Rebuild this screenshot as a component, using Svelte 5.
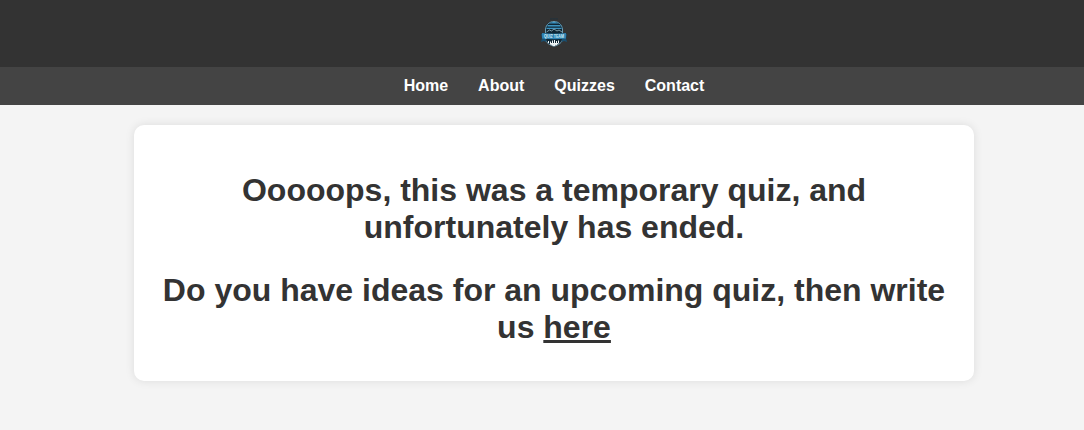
<script>
  const links = ['Home', 'About', 'Quizzes', 'Contact'];
</script>

<div class="page">
  <header>
    <svg class="logo" width="32" height="31" viewBox="0 0 32 31" aria-hidden="true">
      <path d="M12 .8h8M13 0v1.500m3-1.500v1.500m3-1.500v1.500" stroke="#26333b" stroke-width="1" />
      <path d="M7 22V12c0-5.500 3.700-9 9-9s9 3.500 9 9v10z" fill="#102735" />
      <path d="M7.500 15v-4c.6-4.400 4-7.500 8.500-7.500s7.900 3.100 8.500 7.500v4" fill="none" stroke="#74a8bf" stroke-width=".9" />
      <path d="M11 5.500c3-2 7-2 10 0zM9.500 7h13v1.500h-13zM8.500 9.700h15v1.400h-15z" fill="#3c93c0" />
      <path d="M8.500 14l3-2 2 1 2.500-2 3 2 2-1 3 2" fill="none" stroke="#8ba8b4" stroke-width=".9" />
      <path d="M7 20h18c0 4.500-4 7-9 8.500-5-1.500-9-4-9-8.500z" fill="#102735" />
      <path d="M7.500 21c0 3.500 4 6 8.500 7.300 4.500-1.300 8.500-3.800 8.500-7.300" fill="none" stroke="#86b3c5" stroke-width=".8" />
      <path d="M10.500 25v-2m2 3.500v-3m2 4v-5m2 5.500v-6m2 5v-4m2 2.500v-3M12 25.500h8l-4 2.200z" fill="#d8e7ed" stroke="#f0f6f8" stroke-width="1" />
      <path d="M3 16h5v8l-2-1-3 1 1-4zM29 16h-5v8l2-1 3 1-1-4z" fill="#194f70" />
      <path d="M4 15q12 1.500 24 0v5.500Q16 22 4 20.500z" fill="#2e82b2" />
      <text x="16" y="20.200" text-anchor="middle" textLength="20" lengthAdjust="spacingAndGlyphs">QUIZ TEAM</text>
    </svg>
  </header>
  <nav>
    {#each links as link}
      <a href="#top">{link}</a>
    {/each}
  </nav>
  <main>
    <h1>Ooooops, this was a temporary quiz, and unfortunately has ended.</h1>
    <h1>Do you have ideas for an upcoming quiz, then write us <a href="#top">here</a></h1>
  </main>
</div>

<style>
  :global(body) {
    background: #f4f4f4;
    overflow: hidden;
  }
  .page {
    width: 1108px;
    height: 430px;
    font-family: "Liberation Sans", Arial, sans-serif;
    color: #333;
  }
  header {
    display: flex;
    justify-content: center;
    align-items: center;
    height: 67px;
    background: #333;
  }
  .logo text {
    font: bold 4.5px "Liberation Sans", Arial, sans-serif;
    fill: #d2edf5;
  }
  nav {
    display: flex;
    justify-content: center;
    gap: 30px;
    height: 38px;
    line-height: 37px;
    background: #444;
  }
  nav a {
    color: #fff;
    font-size: 16px;
    font-weight: bold;
    text-decoration: none;
  }
  main {
    box-sizing: border-box;
    width: 840px;
    height: 256px;
    margin: 20px auto 0;
    padding: 47px 20px 35px;
    border-radius: 10px;
    background: #fff;
    box-shadow: 0 0 10px rgba(0, 0, 0, 0.1);
    text-align: center;
  }
  h1 {
    margin: 0 0 26px;
    font-size: 32px;
    line-height: 37px;
  }
  h1 a {
    color: inherit;
    text-decoration-thickness: 3px;
  }
</style>
